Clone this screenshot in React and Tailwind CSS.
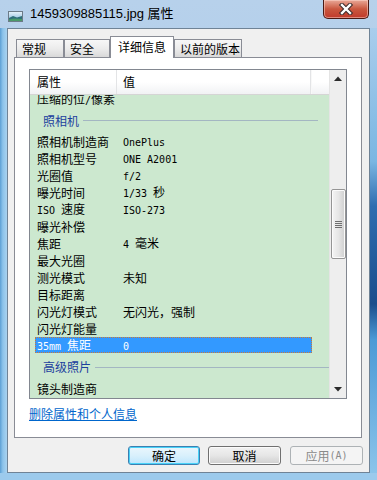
import React from "react";

function Mixed({ text }) {
  const parts = text.split(/([\x00-\x7F]+)/).filter(Boolean);
  return parts.map((p, i) =>
    /^[\x00-\x7F]+$/.test(p) ? (
      <span key={i} className="font-['DejaVu_Sans_Mono',monospace] text-[10px] whitespace-pre">
        {p}
      </span>
    ) : (
      <span key={i}>{p}</span>
    )
  );
}

function Row({ label, value }) {
  return (
    <div className="flex h-[17px] items-center leading-[17px] text-black">
      <div className="w-[87px] pl-[7px] whitespace-nowrap">
        <Mixed text={label} />
      </div>
      <div className="pl-[6px] whitespace-nowrap">
        <Mixed text={value} />
      </div>
    </div>
  );
}

function Group({ label, h }) {
  return (
    <div className={`flex items-center ${h}`}>
      <div className="pl-[13px] pr-[4px] text-[#1c3f9e] whitespace-nowrap leading-none">{label}</div>
      <div className="h-px bg-[#a3b6c2] w-[235px]"></div>
    </div>
  );
}

function Tab({ label, selected, w }) {
  if (selected) {
    return (
      <div
        className={`relative z-10 ${w} h-[22px] -mb-px bg-white border border-b-0 border-[#898c95] flex items-start pt-[2px] pl-[7px]`}
      >
        <span className="leading-[16px] text-black">{label}</span>
      </div>
    );
  }
  return (
    <div
      className={`${w} h-[18px] bg-gradient-to-b from-[#f7f7f7] via-[#ececec] to-[#d9d9d9] border border-b-0 border-[#898c95] flex items-center pl-[5px]`}
    >
      <span className="leading-[16px] text-black">{label}</span>
    </div>
  );
}

function Button({ label, variant }) {
  if (variant === "default") {
    return (
      <div className="w-[72px] h-[19px] rounded-[3px] border border-[#3c7fb1] bg-gradient-to-b from-[#eaf6fd] via-[#d9f0fc] to-[#bee6fd] shadow-[inset_0_0_0_1px_#48d2f8] flex items-center justify-center text-black leading-none">
        {label}
      </div>
    );
  }
  if (variant === "disabled") {
    return (
      <div className="w-[73px] h-[19px] rounded-[3px] border border-[#adb2b5] bg-[#f4f4f4] flex items-center justify-center text-[#8a8a8a] leading-none">
        <Mixed text={label} />
      </div>
    );
  }
  return (
    <div className="w-[73px] h-[19px] rounded-[3px] border border-[#707070] bg-gradient-to-b from-[#f2f2f2] via-[#e6e6e6] to-[#cfcfcf] shadow-[inset_0_0_0_1px_#fbfbfb] flex items-center justify-center text-black leading-none">
      {label}
    </div>
  );
}

export default function App() {
  const rows = [
    ["照相机制造商", "OnePlus"],
    ["照相机型号", "ONE A2001"],
    ["光圈值", "f/2"],
    ["曝光时间", "1/33 秒"],
    ["ISO 速度", "ISO-273"],
    ["曝光补偿", ""],
    ["焦距", "4 毫米"],
    ["最大光圈", ""],
    ["测光模式", "未知"],
    ["目标距离", ""],
    ["闪光灯模式", "无闪光，强制"],
    ["闪光灯能量", ""],
  ];

  return (
    <div className="w-[377px] h-[480px] flex flex-col overflow-hidden bg-[linear-gradient(to_bottom,#b7d1eb,#b0cdea_30%,#a3c8ea)] font-['Noto_Sans_CJK_SC',sans-serif] text-[12px]">
      {/* Title bar */}
      <div className="h-[28px] flex items-start shrink-0">
        <div className="ml-[8px] mt-[11px] w-[15px] h-[11px]">
          <svg width="15" height="11" viewBox="0 0 15 11">
            <defs>
              <linearGradient id="sky" x1="0" y1="0" x2="0" y2="1">
                <stop offset="0" stopColor="#e8f4fb" />
                <stop offset="1" stopColor="#7fb4d8" />
              </linearGradient>
            </defs>
            <rect x="0.5" y="0.5" width="14" height="10" fill="url(#sky)" stroke="#6c7b88" />
            <path d="M1 7 L5 5 L9 6.5 L14 5 L14 10 L1 10 Z" fill="#2f6f7a" />
            <path d="M1 8.5 L6 7.5 L14 8 L14 10 L1 10 Z" fill="#4a9a6a" />
          </svg>
        </div>
        <div className="ml-[7px] mt-[5px] font-['Liberation_Sans','Noto_Sans_CJK_SC',sans-serif] text-[13px] leading-[18px] text-black whitespace-nowrap">
          1459309885115.jpg 属性
        </div>
        <div className="ml-auto mr-[8px] w-[46px] h-[19px] rounded-b-[5px] border border-t-0 border-[#4a1a14] bg-gradient-to-b from-[#e8a898] via-[#c9573f] to-[#c0392b] shadow-[inset_0_0_0_1px_rgba(255,220,210,0.5)] flex items-center justify-center">
          <svg width="16" height="12" viewBox="0 0 16 12">
            <path
              d="M4 2 L12 10 M12 2 L4 10"
              fill="none"
              stroke="#3a2a2a"
              strokeWidth="4.4"
              strokeLinecap="square"
            />
            <path
              d="M4 2 L12 10 M12 2 L4 10"
              fill="none"
              stroke="#ffffff"
              strokeWidth="2.4"
              strokeLinecap="square"
            />
          </svg>
        </div>
      </div>

      {/* Frame body */}
      <div className="flex-1 flex">
        <div className="w-[7px] bg-[linear-gradient(to_right,#5c9fd4,#8cc3ea_40%,#a9d2ef)]"></div>
        <div className="w-[363px] border border-[#6f8396] bg-[#f0f0f0] flex flex-col">
          {/* Tabs */}
          <div className="flex items-end h-[21px] mt-[7px] ml-[8px]">
            <Tab label="常规" w="w-[48px]" />
            <Tab label="安全" w="w-[46px]" />
            <Tab label="详细信息" w="w-[64px]" selected />
            <Tab label="以前的版本" w="w-[68px]" />
          </div>
          {/* Panel */}
          <div className="ml-[6px] w-[348px] h-[381px] bg-white border border-[#898c95] flex flex-col">
            {/* List view */}
            <div className="ml-[14px] mt-[11px] w-[318px] h-[330px] border border-[#828790] flex">
              <div className="w-[299px] flex flex-col">
                {/* Header */}
                <div className="h-[25px] flex border-b border-[#d5d5d5] bg-gradient-to-b from-white via-white to-[#f1f2f4] shrink-0">
                  <div className="w-[87px] border-r border-[#e3e4e6] pl-[7px] flex items-center text-black">属性</div>
                  <div className="w-[194px] border-r border-[#e3e4e6] pl-[6px] flex items-center text-black">值</div>
                  <div className="flex-1 border-l border-[#f8f8f8]"></div>
                </div>
                {/* Body */}
                <div className="flex-1 bg-[#cce8cf] overflow-hidden">
                  <div className="-mt-[4px]">
                    <Row label="压缩的位/像素" value="" />
                    <Group label="照相机" h="h-[25px]" />
                    {rows.map(([l, v]) => (
                      <Row key={l} label={l} value={v} />
                    ))}
                    <div className="h-[17px]">
                      <div className="ml-[5px] w-[277px] h-[16px] bg-[#3399ff] outline-1 outline-dotted outline-[#c8793a] -outline-offset-1 flex items-center text-white leading-none">
                        <div className="w-[82px] pl-[2px] whitespace-nowrap">
                          <Mixed text="35mm 焦距" />
                        </div>
                        <div className="pl-[6px]">
                          <Mixed text="0" />
                        </div>
                      </div>
                    </div>
                    <Group label="高级照片" h="h-[26px]" />
                    <Row label="镜头制造商" value="" />
                  </div>
                </div>
              </div>
              {/* Scrollbar */}
              <div className="w-[17px] bg-[#eeeeee] border-l border-[#e4e4e4] flex flex-col items-center">
                <div className="h-[17px] w-full flex items-center justify-center">
                  <svg width="8" height="5" viewBox="0 0 8 5">
                    <path d="M0 5 L4 0.5 L8 5 Z" fill="#2b2b2b" />
                  </svg>
                </div>
                <div className="h-[102px]"></div>
                <div className="w-[15px] h-[70px] rounded-[2px] border border-[#959595] bg-gradient-to-r from-[#f4f4f4] via-[#e6e6e6] to-[#cfcfcf] shadow-[inset_0_0_0_1px_#fbfbfb] flex flex-col items-center justify-center gap-[1px]">
                  <div className="w-[7px] h-px bg-[#6f6f6f]"></div>
                  <div className="w-[7px] h-px bg-[#6f6f6f]"></div>
                  <div className="w-[7px] h-px bg-[#6f6f6f]"></div>
                  <div className="w-[7px] h-px bg-[#6f6f6f]"></div>
                </div>
                <div className="flex-1"></div>
                <div className="h-[17px] w-full flex items-center justify-center">
                  <svg width="8" height="5" viewBox="0 0 8 5">
                    <path d="M0 0 L4 4.5 L8 0 Z" fill="#2b2b2b" />
                  </svg>
                </div>
              </div>
            </div>
            {/* Link */}
            <div className="ml-[14px] mt-[7px] text-[#0066cc] underline leading-[16px]">删除属性和个人信息</div>
          </div>
          {/* Buttons */}
          <div className="flex mt-[8px] ml-[120px] gap-[8px]">
            <Button label="确定" variant="default" />
            <Button label="取消" />
            <div className="ml-[1px]">
              <Button label="应用(A)" variant="disabled" />
            </div>
          </div>
        </div>
        <div className="w-[7px] bg-[linear-gradient(to_bottom,#a9cdec,#7ab6e2_30%,#2f6db0_40%,#1b4d8c_62%,#4c9ad6_70%,#8cc4ea)]"></div>
      </div>
      <div className="h-[7px] bg-[#9ccaec] shrink-0"></div>
    </div>
  );
}
